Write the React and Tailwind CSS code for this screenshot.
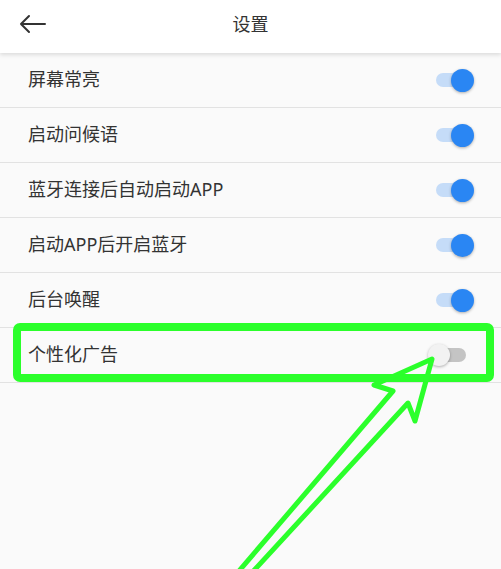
import React from "react";

const rows = [
  { label: "屏幕常亮", on: true },
  { label: "启动问候语", on: true },
  { label: "蓝牙连接后自动启动APP", on: true },
  { label: "启动APP后开启蓝牙", on: true },
  { label: "后台唤醒", on: true },
  { label: "个性化广告", on: false },
];

function Toggle({ on }) {
  return (
    <div className="relative w-[46px] h-[24px] flex items-center">
      <div
        className={
          on
            ? "absolute left-[8px] w-[30px] h-[14px] rounded-full bg-[#c5dcf8]"
            : "absolute left-[8px] w-[30px] h-[14px] rounded-full bg-[#c4c4c4]"
        }
      />
      {on ? (
        <div className="absolute left-[23px] w-[23px] h-[23px] rounded-full bg-[#2a86f3] shadow-[0_1px_3px_rgba(0,0,0,0.3)]" />
      ) : (
        <div className="absolute left-0 w-[22px] h-[22px] rounded-full bg-[#f2f2f2] shadow-[0_1px_3px_rgba(0,0,0,0.3)]" />
      )}
    </div>
  );
}

export default function App() {
  return (
    <div
      className="relative w-[501px] h-[569px] overflow-hidden bg-[#fafafa] text-[#333333]"
      style={{ fontFamily: '"Noto Sans", "Noto Sans CJK SC", sans-serif' }}
    >
      <div className="relative z-10 h-[53px] bg-white shadow-[0_2px_4px_rgba(0,0,0,0.12)] flex items-center justify-center">
        <svg
          className="absolute left-[19px] top-[14px]"
          width="28"
          height="20"
          viewBox="0 0 28 20"
          fill="none"
          stroke="#333"
          strokeWidth="2"
          strokeLinecap="round"
          strokeLinejoin="round"
        >
          <path d="M26 10H2M10 2L2 10L10 18" />
        </svg>
        <span className="text-[18px] leading-none -mt-[6px]">设置</span>
      </div>
      <div className="flex flex-col">
        {rows.map((r) => (
          <div
            key={r.label}
            className="h-[55px] border-b border-[#e2e2e2] flex items-center justify-between pl-[28px] pr-[27px]"
          >
            <span className="text-[18px] leading-none -mt-[3px]">{r.label}</span>
            <Toggle on={r.on} />
          </div>
        ))}
      </div>
      <svg
        className="absolute left-0 top-0 pointer-events-none"
        width="501"
        height="569"
        viewBox="0 0 501 569"
        fill="none"
      >
        <rect x="17" y="327" width="473" height="51" rx="3" stroke="#2bff2b" strokeWidth="8" />
        <path
          d="M233 578 L393 391 L374 385 L432 359 L415 421 L408 403 L247 578"
          stroke="#2bff2b"
          strokeWidth="5"
          strokeLinejoin="round"
        />
      </svg>
    </div>
  );
}
